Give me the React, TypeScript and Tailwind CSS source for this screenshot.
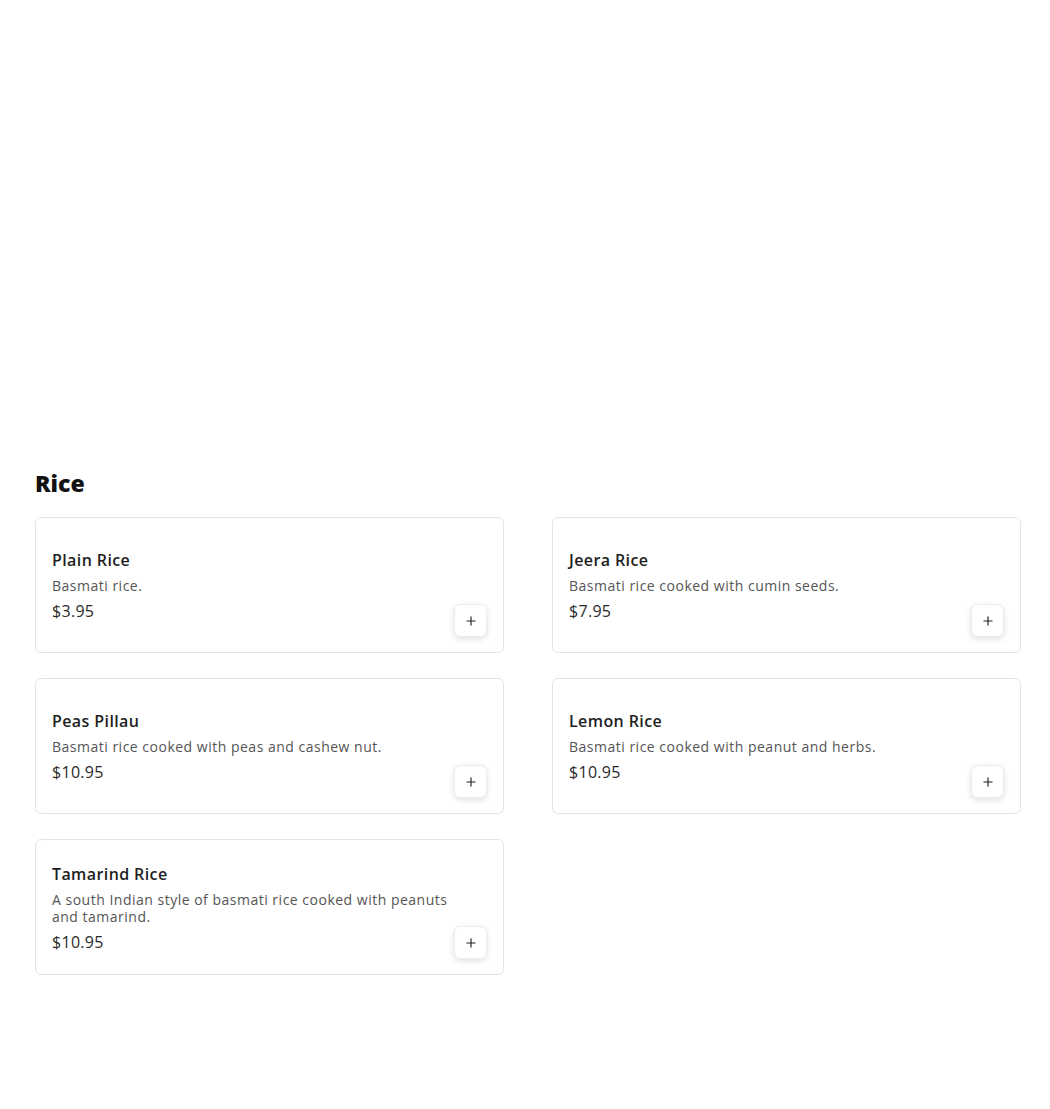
import { Plus } from "lucide-react";

type Dish = { name: string; description: string; price: string };

const DISHES: Dish[] = [
  { name: "Plain Rice", description: "Basmati rice.", price: "$3.95" },
  { name: "Jeera Rice", description: "Basmati rice cooked with cumin seeds.", price: "$7.95" },
  { name: "Peas Pillau", description: "Basmati rice cooked with peas and cashew nut.", price: "$10.95" },
  { name: "Lemon Rice", description: "Basmati rice cooked with peanut and herbs.", price: "$10.95" },
  {
    name: "Tamarind Rice",
    description: "A south Indian style of basmati rice cooked with peanuts and tamarind.",
    price: "$10.95",
  },
];

function DishCard({ dish }: { dish: Dish }) {
  return (
    <div className="flex h-[136px] items-center rounded-md border border-[#e4e4e4] bg-white pt-4 pr-[16px] pb-[15px] pl-4">
      <div className="min-w-0 flex-1">
        <h3 className="text-base leading-6 font-semibold tracking-[0.4px] text-[#1e1e1e]">{dish.name}</h3>
        <p className="mt-[5px] text-sm leading-[17px] tracking-[0.5px] text-[#555555]">{dish.description}</p>
        <p className="mt-[5px] text-base leading-6 tracking-[0.3px] text-[#2a2a2a]">{dish.price}</p>
      </div>
      <button
        type="button"
        className="flex h-[33px] w-[33px] shrink-0 items-center justify-center self-end rounded-md border border-[#ececec] bg-white text-[#222] shadow-[0_2px_6px_rgba(0,0,0,0.12)]"
      >
        <Plus size={14} strokeWidth={2} />
      </button>
    </div>
  );
}

export default function App() {
  return (
    <div
      className="min-h-[1109px] bg-white pt-[467px] pl-[35px]"
      style={{ fontFamily: '"Open Sans", "Liberation Sans", sans-serif' }}
    >
      <h2 className="text-[23px] leading-8 font-extrabold text-[#111]">Rice</h2>
      <div className="mt-[18px] grid w-[986px] grid-cols-2 gap-x-12 gap-y-[25px]">
        {DISHES.map((dish) => (
          <DishCard key={dish.name} dish={dish} />
        ))}
      </div>
    </div>
  );
}
